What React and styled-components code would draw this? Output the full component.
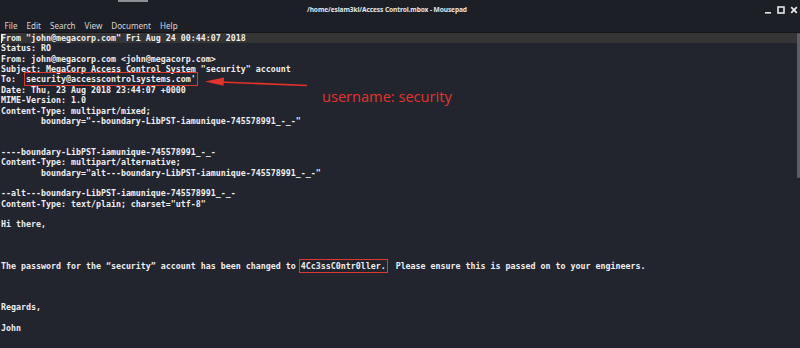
import React from "react";
import styled, { createGlobalStyle } from "styled-components";

const Global = createGlobalStyle`
  html, body { margin: 0; padding: 0; background: #22252e; }
  body { width: 800px; height: 348px; overflow: hidden; }
`;

const Window = styled.div`
  width: 800px;
  height: 348px;
  display: flex;
  flex-direction: column;
  background: #22252e;
  position: relative;
  overflow: hidden;
`;

const TitleBar = styled.div`
  height: 19px;
  display: flex;
  align-items: center;
  background: #1d1f27;
  position: relative;
`;

const TopTab = styled.div`
  position: absolute;
  left: 118px;
  top: 0;
  width: 30px;
  height: 2px;
  background: #8d8f94;
`;

const Title = styled.div`
  flex: 1;
  text-align: center;
  font-family: "Noto Sans", sans-serif;
  font-weight: 700;
  font-size: 6.6px;
  color: #e6e6e6;
  padding-left: 10px;
  letter-spacing: -0.1px;
`;

const Controls = styled.div`
  display: flex;
  align-items: center;
  gap: 5px;
  padding-right: 2px;
`;

const MenuBar = styled.div`
  height: 13px;
  display: flex;
  align-items: center;
  background: #1d1f27;
  border-bottom: 1px solid #14151b;
`;

const MenuItem = styled.span`
  font-family: "Noto Sans", sans-serif;
  font-size: 8.1px;
  color: #d4d4d6;
  padding: 0 4.5px;
`;

const Editor = styled.div`
  flex: 1;
  display: flex;
  position: relative;
`;

const TextArea = styled.div`
  flex: 1;
  font-family: "DejaVu Sans Mono", monospace;
  font-size: 8.3px;
  font-weight: 700;
  line-height: 10.36px;
  color: #eeeeee;
  white-space: pre;
  padding-left: 1px;
`;

const Line = styled.div`
  height: 10.36px;
  background: ${(p) => (p.$current ? "#353535" : "transparent")};
  position: relative;
`;

const Cursor = styled.span`
  position: absolute;
  left: 0;
  top: 1px;
  width: 1px;
  height: 9px;
  background: #f0f0f0;
`;

const Boxed = styled.span`
  outline: 1.5px solid #dc3a30;
  outline-offset: 1.5px;
`;

const ScrollTrack = styled.div`
  width: 3px;
  display: flex;
  flex-direction: column;
`;

const Thumb = styled.div`
  height: 145px;
  background: #5b5e66;
  border-radius: 1px;
`;

const Label = styled.div`
  position: absolute;
  left: 322px;
  top: 53px;
  font-family: "Open Sans", sans-serif;
  font-size: 14.6px;
  color: #e5332a;
`;

const Arrow = styled.svg`
  position: absolute;
  left: 200px;
  top: 40px;
`;

const lines = [
  { t: 'From "john@megacorp.com" Fri Aug 24 00:44:07 2018', current: true },
  { t: "Status: RO" },
  { t: "From: john@megacorp.com <john@megacorp.com>" },
  { t: 'Subject: MegaCorp Access Control System "security" account' },
  { pre: "To:  ", box: "security@accesscontrolsystems.com'", post: "" },
  { t: "Date: Thu, 23 Aug 2018 23:44:07 +0000" },
  { t: "MIME-Version: 1.0" },
  { t: "Content-Type: multipart/mixed;" },
  { t: '        boundary="--boundary-LibPST-iamunique-745578991_-_-"' },
  { t: "" },
  { t: "" },
  { t: "----boundary-LibPST-iamunique-745578991_-_-" },
  { t: "Content-Type: multipart/alternative;" },
  { t: '        boundary="alt---boundary-LibPST-iamunique-745578991_-_-"' },
  { t: "" },
  { t: "--alt---boundary-LibPST-iamunique-745578991_-_-" },
  { t: 'Content-Type: text/plain; charset="utf-8"' },
  { t: "" },
  { t: "Hi there," },
  { t: "" },
  { t: "" },
  { t: "" },
  {
    pre: "The password for the \u201csecurity\u201d account has been changed to ",
    box: "4Cc3ssC0ntr0ller.",
    post: "  Please ensure this is passed on to your engineers.",
  },
  { t: "" },
  { t: "" },
  { t: "" },
  { t: "Regards," },
  { t: "" },
  { t: "John" },
];

export default function App() {
  return (
    <>
      <Global />
      <Window>
        <TitleBar>
          <TopTab />
          <Title>/home/eslam3kl/Access Control.mbox - Mousepad</Title>
          <Controls>
            <svg width="8" height="8" viewBox="0 0 8 8">
              <rect x="1" y="6" width="6" height="1.6" fill="#e8e8e8" />
            </svg>
            <svg width="8" height="8" viewBox="0 0 8 8">
              <rect x="1" y="1" width="6" height="6" fill="none" stroke="#e8e8e8" strokeWidth="1.6" />
            </svg>
            <svg width="8" height="8" viewBox="0 0 8 8">
              <path d="M1.2 1.2 L6.8 6.8 M6.8 1.2 L1.2 6.8" stroke="#e8e8e8" strokeWidth="1.7" />
            </svg>
          </Controls>
        </TitleBar>
        <MenuBar>
          <MenuItem>File</MenuItem>
          <MenuItem>Edit</MenuItem>
          <MenuItem>Search</MenuItem>
          <MenuItem>View</MenuItem>
          <MenuItem>Document</MenuItem>
          <MenuItem>Help</MenuItem>
        </MenuBar>
        <Editor>
          <TextArea>
            {lines.map((l, i) => (
              <Line key={i} $current={l.current}>
                {i === 0 && <Cursor />}
                {l.box !== undefined ? (
                  <>
                    {l.pre}
                    <Boxed>{l.box}</Boxed>
                    {l.post}
                  </>
                ) : (
                  l.t || " "
                )}
              </Line>
            ))}
          </TextArea>
          <ScrollTrack>
            <Thumb />
          </ScrollTrack>
          <Arrow width="120" height="20" viewBox="0 0 120 20">
            <line x1="20" y1="9" x2="107" y2="12.5" stroke="#e5332a" strokeWidth="1.6" />
            <polygon points="5,8.5 24,4.5 23.5,12.8" fill="#e5332a" />
          </Arrow>
          <Label>username: security</Label>
        </Editor>
      </Window>
    </>
  );
}
